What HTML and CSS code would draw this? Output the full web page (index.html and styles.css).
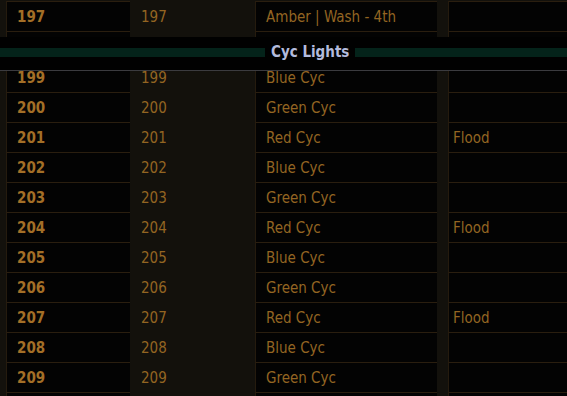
FILE: index.html
```html
<!DOCTYPE html>
<html lang="en">
<head>
<meta charset="utf-8">
<title>Channel Hookup</title>
<link rel="stylesheet" href="styles.css">
</head>
<body>
<div class="sheet">
  <div class="row first">
    <div class="strip"></div><div class="cell chan">197</div><div class="addr">197</div><div class="cell purpose">Amber | Wash - 4th</div><div class="strip"></div><div class="cell type"></div>
  </div>
  <!-- group divider row in the flow; its label floats in the sticky heading -->
  <div class="row divider">
    <div class="strip"></div><div class="cell chan"></div><div class="addr"></div><div class="cell purpose"></div><div class="strip"></div><div class="cell type"></div>
  </div>
  <div class="row">
    <div class="strip"></div><div class="cell chan">199</div><div class="addr">199</div><div class="cell purpose">Blue Cyc</div><div class="strip"></div><div class="cell type"></div>
  </div>
  <div class="row">
    <div class="strip"></div><div class="cell chan">200</div><div class="addr">200</div><div class="cell purpose">Green Cyc</div><div class="strip"></div><div class="cell type"></div>
  </div>
  <div class="row">
    <div class="strip"></div><div class="cell chan">201</div><div class="addr">201</div><div class="cell purpose">Red Cyc</div><div class="strip"></div><div class="cell type">Flood</div>
  </div>
  <div class="row">
    <div class="strip"></div><div class="cell chan">202</div><div class="addr">202</div><div class="cell purpose">Blue Cyc</div><div class="strip"></div><div class="cell type"></div>
  </div>
  <div class="row">
    <div class="strip"></div><div class="cell chan">203</div><div class="addr">203</div><div class="cell purpose">Green Cyc</div><div class="strip"></div><div class="cell type"></div>
  </div>
  <div class="row">
    <div class="strip"></div><div class="cell chan">204</div><div class="addr">204</div><div class="cell purpose">Red Cyc</div><div class="strip"></div><div class="cell type">Flood</div>
  </div>
  <div class="row">
    <div class="strip"></div><div class="cell chan">205</div><div class="addr">205</div><div class="cell purpose">Blue Cyc</div><div class="strip"></div><div class="cell type"></div>
  </div>
  <div class="row">
    <div class="strip"></div><div class="cell chan">206</div><div class="addr">206</div><div class="cell purpose">Green Cyc</div><div class="strip"></div><div class="cell type"></div>
  </div>
  <div class="row">
    <div class="strip"></div><div class="cell chan">207</div><div class="addr">207</div><div class="cell purpose">Red Cyc</div><div class="strip"></div><div class="cell type">Flood</div>
  </div>
  <div class="row">
    <div class="strip"></div><div class="cell chan">208</div><div class="addr">208</div><div class="cell purpose">Blue Cyc</div><div class="strip"></div><div class="cell type"></div>
  </div>
  <div class="row">
    <div class="strip"></div><div class="cell chan">209</div><div class="addr">209</div><div class="cell purpose">Green Cyc</div><div class="strip"></div><div class="cell type"></div>
  </div>
  <div class="row">
    <div class="strip"></div><div class="cell chan"></div><div class="addr"></div><div class="cell purpose"></div><div class="strip"></div><div class="cell type"></div>
  </div>

  <!-- sticky group heading floating over the rows -->
  <div class="group-head">
    <div class="rule rule-left"></div>
    <span class="group-title">Cyc Lights</span>
    <div class="rule rule-right"></div>
  </div>
</div>
</body>
</html>
```

FILE: styles.css
```css
html, body {
  margin: 0;
  padding: 0;
  height: 100%;
  overflow: hidden;
  background: #13110c;
}

body {
  font-family: "DejaVu Sans Condensed", "DejaVu Sans", sans-serif;
  font-size: 15px;
  color: #936522;
}

.sheet {
  position: relative;
  padding-top: 1px;
}

.row {
  display: grid;
  grid-template-columns: 6px 124px 125px 182px 11px 119px;
  height: 30px;
}

.row.first,
.row.divider {
  height: 31px;
}

.strip {
  background: #13110c;
}

.cell,
.addr {
  display: flex;
  align-items: center;
  white-space: nowrap;
  overflow: hidden;
}

.cell {
  background: #030303;
  border-left: 1px solid #251b0e;
  border-bottom: 1px solid #2a1e0f;
}

.row.first .cell {
  border-top: 1px solid #2a1e0f;
}

.chan {
  padding-left: 10px;
  font-weight: bold;
  color: #a36f27;
}

.addr {
  padding-left: 11px;
  background: #13110c;
}

.purpose {
  padding-left: 10px;
}

.type {
  padding-left: 4px;
}

.group-head {
  position: absolute;
  left: 0;
  right: 0;
  top: 37px;
  height: 30px;
  background: #010101;
  border-bottom: 1px solid #3b3b3f;
  display: flex;
  align-items: center;
  padding-bottom: 3px;
  box-sizing: content-box;
}

.rule {
  height: 9px;
  background: #04231a;
}

.rule-left {
  width: 265px;
}

.rule-right {
  flex: 1;
}

.group-title {
  padding: 0 6px;
  font-weight: bold;
  color: #b3bbdd;
  line-height: 16px;
}
```
